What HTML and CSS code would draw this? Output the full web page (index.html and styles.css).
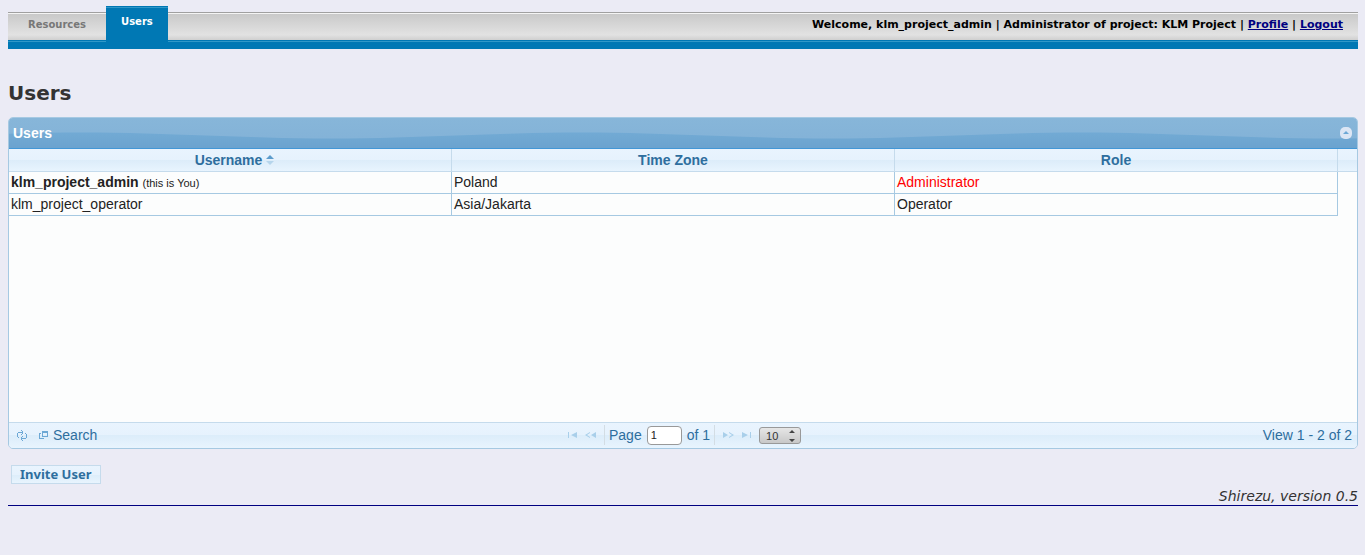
FILE: index.html
```html
<!DOCTYPE html>
<html lang="en">
<head>
<meta charset="utf-8">
<title>Users</title>
<link rel="stylesheet" href="styles.css">
</head>
<body>
<header class="navbar">
  <nav class="tabs">
    <a class="tab" href="#resources">Resources</a>
    <a class="tab tab-active" href="#users">Users</a>
  </nav>
  <div class="account">Welcome, klm_project_admin | Administrator of project: KLM Project | <a href="#profile">Profile</a> | <a href="#logout">Logout</a></div>
</header>
<main>
  <h1 class="heading">Users</h1>
  <section class="grid">
    <div class="grid-title">
      <svg class="wave" aria-hidden="true">
        <defs>
          <pattern id="wave" width="500" height="30" patternUnits="userSpaceOnUse" x="-178">
            <path d="M0 20.500C90 20.500 160 14.500 250 14.500S410 20.500 500 20.500V30H0Z" fill="url(#deep)"/>
          </pattern>
          <linearGradient id="deep" x1="0" y1="0" x2="0" y2="1"><stop offset="0" stop-color="#72aad4"/><stop offset="1" stop-color="#6ba3cf"/></linearGradient>
        </defs>
        <rect width="100%" height="30" fill="url(#wave)"/>
      </svg>
      <span class="grid-caption">Users</span>
      <button class="collapse" type="button" aria-label="Collapse"><svg width="12" height="12" viewBox="0 0 12 12"><rect width="12" height="12" rx="5" fill="#dce6f4"/><path d="M3 7h6L6 4z" fill="#6da8d5"/></svg></button>
    </div>
    <div class="grid-body">
      <table class="users">
        <colgroup><col><col><col><col class="gutter"></colgroup>
        <thead>
          <tr>
            <th class="sorted">Username<svg class="sort" width="9" height="11" viewBox="0 0 9 11"><path d="M0 5h8L4 1z" fill="#5c9ccc"/><path d="M0 7h8L4 11z" fill="#b5d5ec"/></svg></th>
            <th>Time Zone</th>
            <th>Role</th>
            <th class="last"></th>
          </tr>
        </thead>
        <tbody>
          <tr><td><strong>klm_project_admin</strong> <small class="note">(this is You)</small></td><td>Poland</td><td class="admin">Administrator</td><td class="empty"></td></tr>
          <tr><td>klm_project_operator</td><td>Asia/Jakarta</td><td>Operator</td><td class="empty"></td></tr>
        </tbody>
      </table>
    </div>
    <div class="pager">
      <div class="tools">
        <button class="icon-btn" type="button" aria-label="Refresh"><svg width="10" height="11" viewBox="0 0 10 11" fill="#6da8d5"><path d="M0 3h1v4H0zM1 2h1v1H1zM1 7h1v1H1zM2 2h4v1H2zM4 0h1v1H4zM5 1h1v1H5zM5 3h1v1H5zM4 4h1v1H4zM9 4h1v4H9zM8 3h1v1H8zM8 8h1v1H8zM4 8h4v1H4zM5 6h1v1H5zM4 7h1v1H4zM4 9h1v1H4zM5 10h1v1H5z"/></svg></button>
        <button class="icon-btn" type="button"><svg width="9" height="8" viewBox="0 0 9 8" fill="#6da8d5"><path d="M3 0h6v6H3zM4 2v3h4V2z" fill-rule="evenodd"/><path d="M0 2h2v1H1v4h4v1H0z"/></svg>Search</button>
      </div>
      <div class="pages">
        <button class="step" type="button" aria-label="First page"><svg width="9" height="6" viewBox="0 0 9 6" fill="#a9cfea"><path d="M0 0h1v6H0zM9 0v6L3 3z"/></svg></button>
        <button class="step" type="button" aria-label="Previous page"><svg width="11" height="6" viewBox="0 0 11 6" fill="#a9cfea"><path d="M11 0v6L6 3zM5 0v1L2 3l3 2v1L0 3z"/></svg></button>
        <label class="page-of">Page <input class="page-no" type="text" value="1"> of 1</label>
        <button class="step" type="button" aria-label="Next page"><svg width="11" height="6" viewBox="0 0 11 6" fill="#a9cfea"><path d="M0 0v6L5 3zM6 0v1l3 2-3 2v1l5-3z"/></svg></button>
        <button class="step" type="button" aria-label="Last page"><svg width="9" height="6" viewBox="0 0 9 6" fill="#a9cfea"><path d="M8 0h1v6H8zM0 0v6l6-3z"/></svg></button>
        <span class="size-box"><select class="size" aria-label="Rows per page"><option>10</option></select><svg class="arrows" width="6" height="12" viewBox="0 0 6 12" fill="#444"><path d="M0 3h6L3 0zM0 9h6L3 12z"/></svg></span>
      </div>
      <div class="summary">View 1 - 2 of 2</div>
    </div>
  </section>
  <button class="invite" type="button">Invite User</button>
</main>
<footer class="footer">Shirezu, version 0.5</footer>
</body>
</html>
```
FILE: styles.css
```css
* { box-sizing: border-box; }
body {
  margin: 0;
  padding: 6px 7px 0 8px;
  background: #ebebf5;
  color: #222;
  font: 14px/20px "Liberation Sans", Arial, sans-serif;
}
button {
  margin: 0;
  padding: 0;
  border: 0;
  background: none;
  color: inherit;
  font: inherit;
}
.navbar {
  display: flex;
  justify-content: space-between;
  align-items: stretch;
  height: 43px;
  background:
    linear-gradient(#3098c8, #3098c8) 0 35px / 100% 1px no-repeat,
    linear-gradient(#0078b4, #0078b4) 0 34px / 100% 9px no-repeat,
    linear-gradient(#a0a0a0, #a0a0a0) 0 6px / 100% 1px no-repeat,
    linear-gradient(#f4f4f4, #f4f4f4) 0 7px / 100% 1px no-repeat,
    linear-gradient(#c9c9c9, #e2e2e2 80%, #cfcfcf) 0 8px / 100% 26px no-repeat;
  font: bold 10px/14px "DejaVu Sans", Verdana, sans-serif;
}
.tabs { display: flex; }
.tab {
  padding: 12px 20px 0;
  color: #777;
  text-decoration: none;
}
.tab-active {
  padding: 8px 15px 0;
  border-top: 1px solid #0078b4;
  background: linear-gradient(#3098c8, #3098c8) 0 0 / 100% 1px no-repeat #0078b4;
  color: #fff;
}
.account {
  padding: 12px 15px 0 0;
  color: #000;
  font-size: 11px;
}
.account a { color: #000080; }
.heading {
  margin: 32px 0 12px;
  color: #333;
  font: bold 20px/24px "DejaVu Sans", Verdana, sans-serif;
}
.grid {
  display: flex;
  flex-direction: column;
  overflow: hidden;
  border: 1px solid #a6c9e2;
  border-radius: 5px;
}
.grid-title {
  position: relative;
  display: flex;
  justify-content: space-between;
  align-items: center;
  height: 31px;
  padding: 0 5px 0 4px;
  border-bottom: 1px solid #4297d7;
  background: linear-gradient(#87b6d9, #82b1d7);
  color: #fff;
  font-weight: bold;
}
.wave {
  position: absolute;
  inset: 0;
  width: 100%;
  height: 30px;
}
.grid-caption, .collapse { position: relative; }
.collapse svg { display: block; }
.grid-body {
  min-height: 273px;
  background: #fcfdfd;
}
.users {
  width: 100%;
  table-layout: fixed;
  border-collapse: separate;
  border-spacing: 0;
}
.gutter { width: 19px; }
.users th {
  height: 23px;
  padding: 0;
  border-right: 1px solid #c5dbec;
  border-bottom: 1px solid #c5dbec;
  background: linear-gradient(#e9f4fe, #e6f2fd 50%, #dcecf9 50%, #e8f4fe);
  color: #2e6e9e;
}
.users th.sorted { padding-left: 10px; }
.sort { margin-left: 4px; }
.users th.last { border-right: 0; }
.users td {
  height: 22px;
  padding: 0 2px 1px;
  border-right: 1px solid #a6c9e2;
  border-bottom: 1px solid #a6c9e2;
  line-height: 18px;
}
.users td.empty { border: 0; }
.users td.admin { color: #f00; }
.note { font-size: 11px; }
.pager {
  display: grid;
  grid-template-columns: 1fr auto 1fr;
  align-items: center;
  height: 26px;
  padding: 0 5px 1px 8px;
  border-top: 1px solid #c5dbec;
  background: linear-gradient(#e9f4fe, #e6f2fd 50%, #dcedfa 50%, #e8f4fe);
  color: #2e6e9e;
}
.tools, .pages, .icon-btn { display: flex; align-items: center; }
.tools { gap: 12px; }
.icon-btn { gap: 5px; }
.pages { gap: 8px; }
.step svg { display: block; }
.page-of {
  display: flex;
  align-items: center;
  gap: 5px;
  padding: 0 4px;
  border: solid #d3dde4;
  border-width: 0 1px;
}
.page-no {
  width: 35px;
  height: 19px;
  padding: 0 3px;
  border: 1px solid #999;
  border-radius: 4px;
  background: #fff;
  color: #222;
  font: 11px "Liberation Sans", Arial, sans-serif;
}
.size-box { position: relative; display: flex; }
.size {
  appearance: none;
  width: 42px;
  height: 17px;
  padding: 2px 6px 0;
  border: 1px solid #999;
  border-radius: 3px;
  background: linear-gradient(#e6e6e6, #c8c8c8);
  color: #333;
  font: 11px "Liberation Sans", Arial, sans-serif;
}
.arrows {
  position: absolute;
  top: 3px;
  right: 6px;
}
.summary { text-align: right; }
.invite {
  display: block;
  margin: 16px 0 0 3px;
  padding: 0 8px;
  border: 1px solid #c5dbec;
  background: linear-gradient(#e9f4fe, #e6f2fd 50%, #dcedfa 50%, #e8f4fe);
  color: #2e6e9e;
  font: bold 13px/17px "Noto Sans", "Open Sans", sans-serif;
}
.footer {
  margin-top: 4px;
  border-bottom: 1px solid #000080;
  color: #333;
  font: italic 14px/17px "DejaVu Sans", Verdana, sans-serif;
  text-align: right;
}
```
